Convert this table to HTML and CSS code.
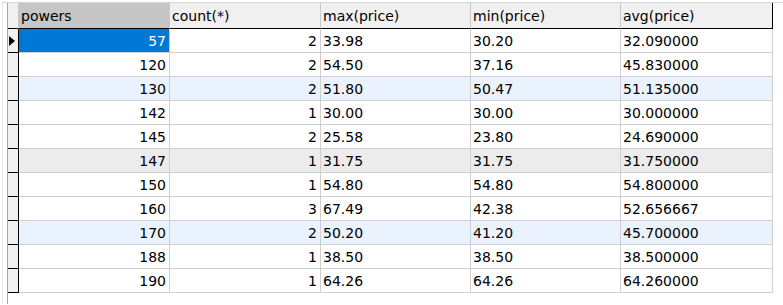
FILE: index.html
```html
<!DOCTYPE html>
<html lang="en">
<head>
    <meta charset="UTF-8">
    <title>Query Result - powers</title>
    <link rel="stylesheet" href="styles.css">
</head>
<body>
    <div class="frame">
        <div class="grid">
            <table class="results">
                <thead>
                    <tr>
                        <th class="row-head"></th>
                        <th class="col-powers selected-col">powers</th>
                        <th class="col-count">count(*)</th>
                        <th class="col-max">max(price)</th>
                        <th class="col-min">min(price)</th>
                        <th class="col-avg last">avg(price)</th>
                    </tr>
                </thead>
                <tbody>
                    <tr>
                        <td class="row-head"><span class="pointer"></span></td>
                        <td class="num selected">57</td>
                        <td class="num">2</td>
                        <td>33.98</td>
                        <td>30.20</td>
                        <td>32.090000</td>
                    </tr>
                    <tr>
                        <td class="row-head"></td>
                        <td class="num">120</td>
                        <td class="num">2</td>
                        <td>54.50</td>
                        <td>37.16</td>
                        <td>45.830000</td>
                    </tr>
                    <tr class="tint">
                        <td class="row-head"></td>
                        <td class="num">130</td>
                        <td class="num">2</td>
                        <td>51.80</td>
                        <td>50.47</td>
                        <td>51.135000</td>
                    </tr>
                    <tr>
                        <td class="row-head"></td>
                        <td class="num">142</td>
                        <td class="num">1</td>
                        <td>30.00</td>
                        <td>30.00</td>
                        <td>30.000000</td>
                    </tr>
                    <tr>
                        <td class="row-head"></td>
                        <td class="num">145</td>
                        <td class="num">2</td>
                        <td>25.58</td>
                        <td>23.80</td>
                        <td>24.690000</td>
                    </tr>
                    <tr class="hover">
                        <td class="row-head"></td>
                        <td class="num">147</td>
                        <td class="num">1</td>
                        <td>31.75</td>
                        <td>31.75</td>
                        <td>31.750000</td>
                    </tr>
                    <tr>
                        <td class="row-head"></td>
                        <td class="num">150</td>
                        <td class="num">1</td>
                        <td>54.80</td>
                        <td>54.80</td>
                        <td>54.800000</td>
                    </tr>
                    <tr>
                        <td class="row-head"></td>
                        <td class="num">160</td>
                        <td class="num">3</td>
                        <td>67.49</td>
                        <td>42.38</td>
                        <td>52.656667</td>
                    </tr>
                    <tr class="tint">
                        <td class="row-head"></td>
                        <td class="num">170</td>
                        <td class="num">2</td>
                        <td>50.20</td>
                        <td>41.20</td>
                        <td>45.700000</td>
                    </tr>
                    <tr>
                        <td class="row-head"></td>
                        <td class="num">188</td>
                        <td class="num">1</td>
                        <td>38.50</td>
                        <td>38.50</td>
                        <td>38.500000</td>
                    </tr>
                    <tr>
                        <td class="row-head"></td>
                        <td class="num">190</td>
                        <td class="num">1</td>
                        <td>64.26</td>
                        <td>64.26</td>
                        <td>64.260000</td>
                    </tr>
                </tbody>
            </table>
        </div>
    </div>
</body>
</html>
```

FILE: styles.css
```css
html, body {
    margin: 0;
    padding: 0;
    height: 100%;
    background-color: white;
}
body {
    font-family: "DejaVu Sans", Verdana, sans-serif;
    font-size: 14px;
    color: #000;
}
.frame {
    margin: 2px 0 0 2px;
    border-top: 1px solid #d6d6d6;
    border-left: 1px solid #e4e4e4;
    height: calc(100% - 3px);
    box-sizing: border-box;
}
.grid {
    margin-left: 4px;
    border-left: 1px solid #a8a8a8;
    height: 100%;
}
.results {
    border-collapse: separate;
    border-spacing: 0;
    table-layout: fixed;
}
.results th,
.results td {
    box-sizing: border-box;
    padding: 0 2px;
    white-space: nowrap;
    overflow: hidden;
    line-height: 16px;
}
.results th {
    height: 26px;
    background-color: #f0f0f0;
    font-weight: normal;
    text-align: left;
    border-right: 1px solid #c8c8c8;
    border-bottom: 1px solid #000;
}
.results th.selected-col {
    background-color: #c6c6c6;
}
.results th.last {
    border-right: 1px solid #000;
}
.results td {
    height: 24px;
    border-right: 1px solid #cfcfcf;
    border-bottom: 1px solid #cfcfcf;
}
.results td.num {
    text-align: right;
    padding-right: 3px;
}
.results td.selected {
    background-color: #0078d7;
    color: white;
}
.results tr.tint td {
    background-color: #eaf3fd;
}
.results tr.hover td {
    background-color: #ececec;
}
.results .row-head,
.results tr td.row-head {
    width: 11px;
    padding: 0;
    background-color: #f0f0f0;
    border-right: 1px solid #000;
}
.results th.row-head {
    border-right: 1px solid #c8c8c8;
}
.results td.row-head {
    border-bottom: 1px solid #000;
    position: relative;
}
.pointer {
    display: block;
    width: 0;
    height: 0;
    margin-left: 1px;
    border-top: 5px solid transparent;
    border-bottom: 5px solid transparent;
    border-left: 6px solid #000;
}
.col-powers { width: 151px; }
.col-count { width: 151px; }
.col-max { width: 150px; }
.col-min { width: 150px; }
.col-avg { width: 152px; }
```
